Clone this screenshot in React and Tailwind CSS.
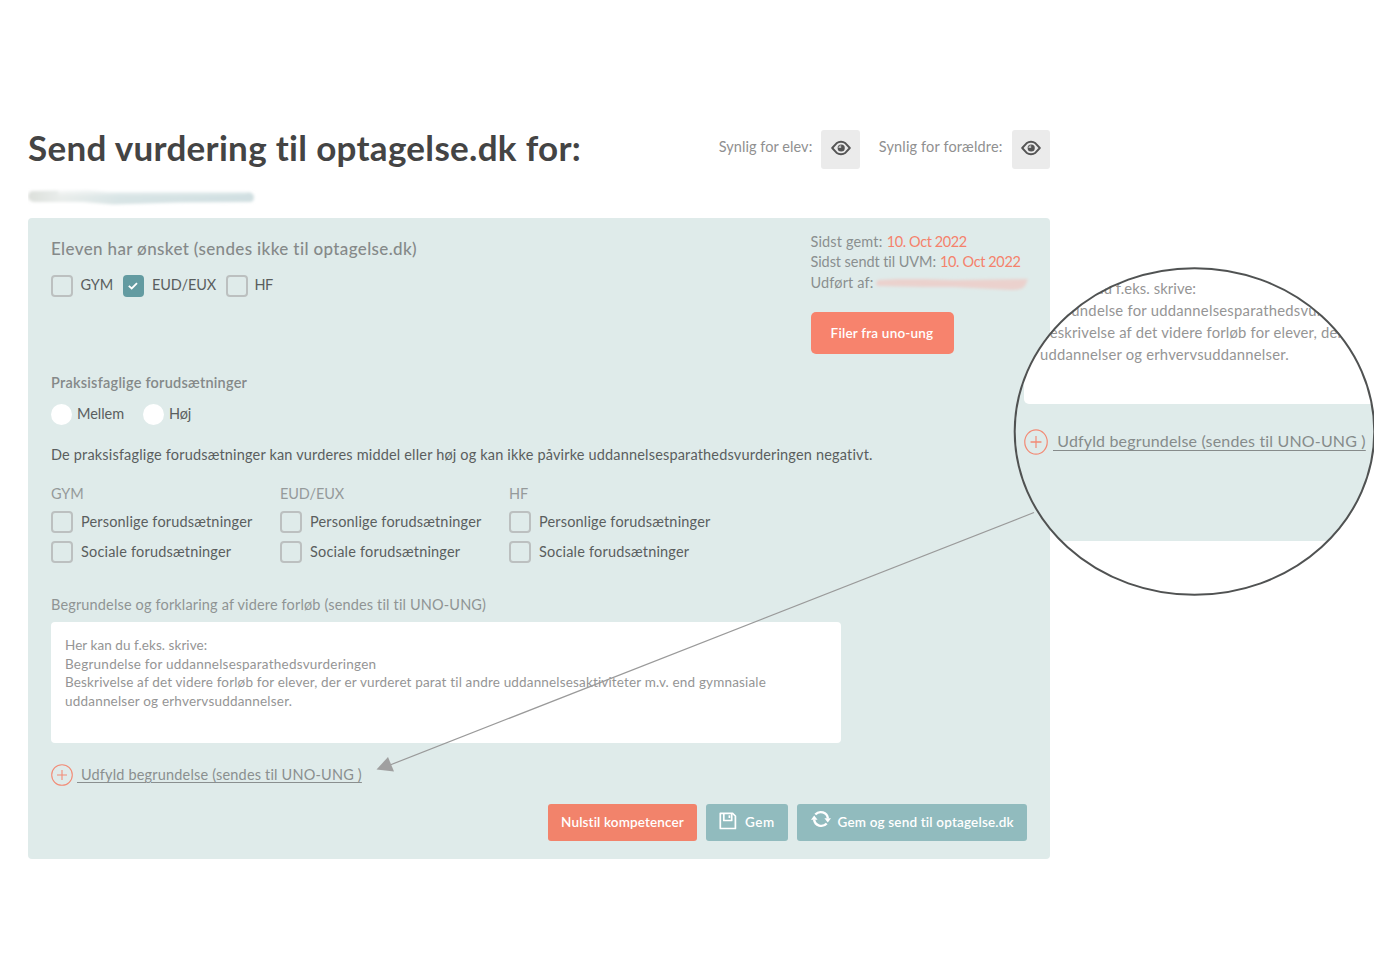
import React from "react";

function Eye() {
  return (
    <svg className="-mt-[3px]" width="20" height="16" viewBox="0 0 20 16" fill="none">
      <path d="M1.200 8L5.500 3.300Q7.500 1.800 10 1.800T14.500 3.300L18.800 8L14.500 12.700Q12.500 14.200 10 14.200T5.500 12.700Z" stroke="#555" strokeWidth="1.900" strokeLinejoin="round" />
      <circle cx="10.200" cy="8" r="3.600" fill="#555" />
      <path d="M10.200 8H7.400A2.800 2.800 0 0 1 10.200 5.200Z" fill="#bbb" />
    </svg>
  );
}

function Save() {
  return (
    <svg width="18" height="18" viewBox="0 0 18 18" fill="none" stroke="#fff" strokeWidth="1.700" strokeLinejoin="round">
      <path d="M1.300 1.300H13.600L16.400 4V16.500H1.300Z" />
      <path d="M4.800 1.500V8.500H12.700V1.500" />
      <path d="M10.400 3.300V6" />
    </svg>
  );
}

function Sync() {
  return (
    <svg width="20" height="18" viewBox="0 0 20 18" fill="none">
      <path d="M4.300 4.600A7.200 7.200 0 0 1 16.900 8.500" stroke="#fff" strokeWidth="2.300" />
      <path d="M15.700 13.400A7.200 7.200 0 0 1 3.100 9.500" stroke="#fff" strokeWidth="2.300" />
      <path d="M0 9.800L3.200 5.600L6.600 9.800Z" fill="#fff" />
      <path d="M13.400 8.200L16.800 12.400L20 8.200Z" fill="#fff" />
    </svg>
  );
}

function Plus({ className }) {
  return (
    <svg className={className} viewBox="0 0 22 22" preserveAspectRatio="none" fill="none" stroke="#f28b76" strokeWidth="1.100">
      <circle cx="11" cy="11" r="10.300" />
      <path d="M11 6V16M6 11H16" />
    </svg>
  );
}

function Box({ checked }) {
  if (checked) {
    return (
      <span className="flex h-[21.500px] w-[21.500px] shrink-0 items-center justify-center rounded-[4px] bg-[#639ba1]">
        <svg width="10" height="8" viewBox="0 0 10 8" fill="none" stroke="#fff" strokeWidth="1.800">
          <path d="M0.800 3.800L3.700 6.500L9 1.200" />
        </svg>
      </span>
    );
  }
  return <span className="h-[21.500px] w-[21.500px] shrink-0 rounded-[4px] border-2 border-[#bcc0c0]" />;
}

function Competences({ title }) {
  return (
    <div className="w-[229px]">
      <div className="h-5 text-[14.500px] leading-5 tracking-[-0.120px] text-[#959a9a]">{title}</div>
      <div className="mt-[7px] flex h-[21.500px] items-center gap-[8.500px]">
        <Box />
        <span className="tracking-[0.170px]">Personlige forudsætninger</span>
      </div>
      <div className="mt-[8.500px] flex h-[21.500px] items-center gap-[8.500px]">
        <Box />
        <span className="tracking-[0.190px]">Sociale forudsætninger</span>
      </div>
    </div>
  );
}

function Lens() {
  return (
    <div className="absolute left-[1014px] top-[267px] h-[329px] w-[360px] overflow-hidden">
      <div className="h-[329px] w-[361px] overflow-hidden rounded-[50%] bg-white">
        <div className="h-[274px] bg-[#dfebea] pl-[10px]">
          <div className="h-[137px] rounded-bl-[5px] bg-white pl-4 pt-[10px] text-[14.800px] leading-[22px] text-[#959595]">
            <div className="whitespace-nowrap tracking-[0.080px]">Her kan du f.eks. skrive:</div>
            <div className="whitespace-nowrap tracking-[0.250px]">Begrundelse for uddannelsesparathedsvurderingen</div>
            <div className="whitespace-nowrap tracking-[0.190px]">Beskrivelse af det videre forløb for elever, der er vurderet</div>
            <div className="whitespace-nowrap tracking-[0.220px]">uddannelser og erhvervsuddannelser.</div>
          </div>
          <div className="mt-[25px] flex h-[26px] items-center">
            <Plus className="h-[26px] w-[24px]" />
            <span className="-mt-[2px] ml-[5px] whitespace-pre text-[16px] leading-6 tracking-[0.160px] text-[#868b8b] underline decoration-1 underline-offset-[3px]">{" Udfyld begrundelse (sendes til UNO-UNG )"}</span>
          </div>
        </div>
      </div>
    </div>
  );
}

export default function App() {
  return (
    <div className="relative h-[980px] w-[1400px] overflow-hidden bg-white pl-7 pt-[126px] font-['Lato',sans-serif] text-[14.500px] text-[#5a5e5e]">
      <header className="flex h-[62px] w-[1022px] justify-between">
        <h1 className="h-[42px] whitespace-nowrap text-[35px] font-bold leading-[42px] tracking-[0.310px] text-[#444]">Send vurdering til optagelse.dk for:</h1>
        <div className="flex items-start whitespace-nowrap pt-[4.400px] text-[#909090]">
          <span className="mt-[7px] leading-5 tracking-[0.060px]">Synlig for elev:</span>
          <span className="ml-[9px] flex h-[39px] w-[38.500px] items-center justify-center rounded-[3px] bg-[#ebebeb]"><Eye /></span>
          <span className="ml-[19px] mt-[7px] leading-5 tracking-[0.150px]">Synlig for forældre:</span>
          <span className="ml-[9px] flex h-[39px] w-[38.500px] items-center justify-center rounded-[3px] bg-[#ebebeb]"><Eye /></span>
        </div>
      </header>

      <svg className="block h-[30px] w-[240px]" viewBox="0 0 240 30">
        <defs>
          <filter id="soft" x="-5%" y="-50%" width="110%" height="200%"><feGaussianBlur stdDeviation="1.600" /></filter>
          <linearGradient id="smear" x1="0" x2="1" y1="0" y2="0">
            <stop offset="0" stopColor="#dcdfdb" />
            <stop offset="0.150" stopColor="#e9edeb" />
            <stop offset="0.400" stopColor="#d8e4e5" />
            <stop offset="1" stopColor="#d0dfe1" />
          </linearGradient>
          <linearGradient id="fade" x1="0" x2="0" y1="0" y2="1">
            <stop offset="0" stopColor="#fff" stopOpacity="0.850" />
            <stop offset="0.700" stopColor="#fff" stopOpacity="0" />
          </linearGradient>
        </defs>
        <g filter="url(#soft)">
          <path d="M5 3L60 2L80 4L220 4Q226 5 226 9Q226 14 222 14L150 14.500L85 16.500L55 14L6 14Q0 13 0 8Q1 3 5 3Z" fill="url(#smear)" />
          <path d="M30 0H220V6L80 12L30 8Z" fill="url(#fade)" />
        </g>
      </svg>

      <main className="h-[641px] w-[1022px] rounded-[4px] bg-[#dfebea] px-[23px] pt-[13.500px]">
        <div className="flex h-[122.500px]">
          <div className="w-[759.500px] shrink-0 pt-[6.500px]">
            <h2 className="h-5 text-[17px] font-medium leading-[21px] tracking-[0.360px] text-[#858989]">Eleven har ønsket (sendes ikke til optagelse.dk)</h2>
            <div className="mt-[17px] flex h-[21.500px] items-center">
              <Box />
              <span className="-mt-px ml-[8px] w-[42px] tracking-[-0.120px]">GYM</span>
              <Box checked />
              <span className="-mt-px ml-[8px] w-[74px] tracking-[-0.120px]">EUD/EUX</span>
              <Box />
              <span className="-mt-px ml-[7px] tracking-[-0.500px]">HF</span>
            </div>
          </div>
          <div className="w-[217px] shrink-0 whitespace-nowrap leading-[20.500px] text-[#8a8f8f]">
            <div className="tracking-[0.150px]">Sidst gemt: <span className="ml-[0.500px] tracking-[-0.430px] text-[#f5826c]">10. Oct 2022</span></div>
            <div className="tracking-[-0.080px]">Sidst sendt til UVM: <span className="ml-[0.500px] tracking-[-0.380px] text-[#f5826c]">10. Oct 2022</span></div>
            <div className="flex tracking-[0.140px]">
              Udført af:
              <svg className="ml-px mt-[3px] h-4 w-[156px] shrink-0" viewBox="0 0 156 16">
                <defs><filter id="blush" x="-5%" y="-50%" width="110%" height="200%"><feGaussianBlur stdDeviation="1.500" /></filter></defs>
                <path d="M4 4L24 3L50 3L80 4L154 3L151 10Q148 14 138 14L80 11L50 11L4 10Q0 8 4 4Z" fill="#ebd1cd" filter="url(#blush)" />
              </svg>
            </div>
            <button className="mt-[19px] block h-[42px] w-[143px] rounded-[5px] bg-[#f7836d] text-[13.500px] font-semibold leading-[42px] tracking-[0.200px] text-white">Filer fra uno-ung</button>
          </div>
        </div>

        <h3 className="mt-[19px] h-5 text-[14.500px] font-semibold leading-5 tracking-[0.230px] text-[#858989]">Praksisfaglige forudsætninger</h3>
        <div className="mt-[11px] flex h-[21px] items-center">
          <span className="h-[20.500px] w-[20.500px] rounded-full bg-white" />
          <span className="-mt-px ml-[5.500px] w-[66px] tracking-[-0.030px]">Mellem</span>
          <span className="h-[20.500px] w-[20.500px] rounded-full bg-white" />
          <span className="-mt-px ml-[5.500px] tracking-[-0.150px]">Høj</span>
        </div>
        <p className="mt-[19px] h-5 whitespace-nowrap leading-[21px] tracking-[0.172px]">De praksisfaglige forudsætninger kan vurderes middel eller høj og kan ikke påvirke uddannelsesparathedsvurderingen negativt.</p>

        <div className="mt-[20px] flex">
          <Competences title="GYM" />
          <Competences title="EUD/EUX" />
          <Competences title="HF" />
        </div>

        <div className="mt-[32.500px] h-5 leading-5 tracking-[0.155px] text-[#8f9494]">Begrundelse og forklaring af videre forløb (sendes til til UNO-UNG)</div>
        <div className="mt-[7px] h-[121px] w-[790px] rounded-[4px] bg-white px-[14px] pt-[14px] text-[13.500px] leading-[18.670px] text-[#959595]">
          <div className="tracking-[0.060px]">Her kan du f.eks. skrive:</div>
          <div className="tracking-[0.230px]">Begrundelse for uddannelsesparathedsvurderingen</div>
          <div className="whitespace-nowrap tracking-[0.165px]">Beskrivelse af det videre forløb for elever, der er vurderet parat til andre uddannelsesaktiviteter m.v. end gymnasiale</div>
          <div className="tracking-[0.200px]">uddannelser og erhvervsuddannelser.</div>
        </div>
        <div className="mt-[21px] flex h-[22px] items-center">
          <Plus className="h-[22px] w-[22px]" />
          <span className="ml-[4px] whitespace-pre leading-5 tracking-[0.180px] text-[#8a8f8f] underline decoration-1 underline-offset-[2px]">{" Udfyld begrundelse (sendes til UNO-UNG )"}</span>
        </div>
        <div className="mt-[18px] flex h-[36.500px] justify-end gap-[9px] whitespace-nowrap text-[13.500px] font-semibold leading-[20px] text-white">
          <button className="w-[149px] rounded-[3px] bg-[#f2836b] pb-px tracking-[0.130px]">Nulstil kompetencer</button>
          <button className="flex w-[82px] items-center rounded-[3px] bg-[#91bbbe] pb-px pl-[12.500px] tracking-[0.550px]">
            <span className="-mt-[1px] mr-[8.500px]"><Save /></span>Gem
          </button>
          <button className="flex w-[230px] items-center rounded-[3px] bg-[#91bbbe] pb-px pl-[13.500px] tracking-[0.170px]">
            <span className="-mt-[5px] mr-[7px]"><Sync /></span>Gem og send til optagelse.dk
          </button>
        </div>
      </main>

      <Lens />
      <svg className="pointer-events-none absolute left-0 top-0" width="1374" height="980" viewBox="0 0 1374 980" fill="none">
        <path d="M1034 512.500L390 765" stroke="#9a9a9a" strokeWidth="1.200" />
        <path d="M376.500 769.500L388 757L394 771.500Z" fill="#a0a0a0" />
        <ellipse cx="1194.500" cy="431.500" rx="179.800" ry="163.300" stroke="#505252" strokeWidth="2" />
      </svg>
    </div>
  );
}
